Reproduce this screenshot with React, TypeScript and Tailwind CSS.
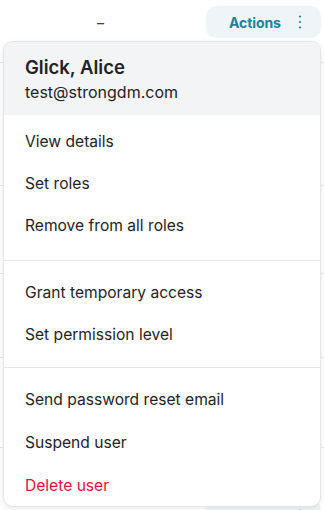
import React from "react";

const font = { fontFamily: "Inter, 'Noto Sans', sans-serif" };

function Item({ label, danger }: { label: string; danger?: boolean }) {
  return (
    <div
      className={`h-[42px] flex items-center px-[21px] text-[15.6px] ${
        danger ? "text-[#e0123c]" : "text-[#1f2328]"
      }`}
    >
      {label}
    </div>
  );
}

function ActionsButton() {
  return (
    <div className="w-[115px] h-[32px] rounded-[10px] bg-[#eef4f7] flex items-center pl-[23px] pr-[14px] justify-between">
      <span className="text-[14px] font-bold text-[#1a83a3] tracking-[-0.1px]">Actions</span>
      <svg width="4" height="16" viewBox="0 0 4 16" className="mr-[5px]">
        <circle cx="2" cy="2.5" r="1.1" fill="#1a83a3" />
        <circle cx="2" cy="8" r="1.1" fill="#1a83a3" />
        <circle cx="2" cy="13.5" r="1.1" fill="#1a83a3" />
      </svg>
    </div>
  );
}

export default function App() {
  return (
    <div className="relative w-[324px] h-[510px] overflow-hidden bg-white" style={font}>
      {/* background table */}
      <div className="flex flex-col">
        <div className="h-[63px] border-b border-[#e5e7eb] flex pt-[6px]">
          <div className="w-[206px] h-[32px] flex items-center">
            <span className="ml-[97px] text-[#3f4349] text-[14px] font-medium">–</span>
          </div>
          <ActionsButton />
        </div>
        <div className="h-[123px] border-b border-[#e5e7eb]" />
        <div className="h-[88px] border-b border-[#e5e7eb]" />
        <div className="h-[84px] border-b border-[#e5e7eb]" />
        <div className="h-[90px] border-b border-[#e5e7eb]" />
        <div className="flex pt-[52px] pl-[206px]">
          <ActionsButton />
        </div>
      </div>

      {/* dropdown menu */}
      <div className="absolute left-[3px] top-[41px] w-[318px] h-[466px] rounded-[10px] border border-[#e3e5e8] bg-white overflow-hidden shadow-[0_2px_6px_rgba(0,0,0,0.08)]">
        <div className="bg-[#f3f4f6] pt-[13px] pb-[11px] px-[21px]">
          <div className="text-[18.5px] leading-[24px] font-semibold text-[#1f2328]">Glick, Alice</div>
          <div className="mt-[1px] text-[16px] leading-[24px] text-[#1f2328]">test@strongdm.com</div>
        </div>
        <div className="pt-[6px] pb-[13px] border-b border-[#e5e7eb]">
          <Item label="View details" />
          <Item label="Set roles" />
          <Item label="Remove from all roles" />
        </div>
        <div className="pt-[11px] pb-[11px] border-b border-[#e5e7eb]">
          <Item label="Grant temporary access" />
          <Item label="Set permission level" />
        </div>
        <div className="pt-[11px]">
          <Item label="Send password reset email" />
          <div className="h-[1px]" />
          <Item label="Suspend user" />
          <div className="h-[1px]" />
          <Item label="Delete user" danger />
        </div>
      </div>
    </div>
  );
}
